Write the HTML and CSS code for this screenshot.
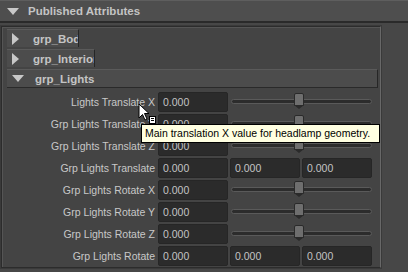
FILE: index.html
```html
<!DOCTYPE html>
<html lang="en">
<head>
  <meta charset="UTF-8" />
  <title>Published Attributes</title>
  <link rel="stylesheet" href="styles.css">
</head>
<body>

  <div class="section-head"><span class="tri-down"></span>Published Attributes</div>

  <div class="section-body">
    <div class="frame">
      <div class="group-head cut-body"><span class="tri-right"></span>grp_Body</div>
      <div class="group-head cut-interior"><span class="tri-right"></span>grp_Interior</div>
      <div class="group-head open"><span class="tri-down small"></span>grp_Lights</div>

      <div class="rows">
        <div class="row">
          <span class="label">Lights Translate X</span>
          <span class="field">0.000</span>
          <div class="slider"><div class="track"></div><div class="handle"></div></div>
        </div>
        <div class="row">
          <span class="label">Grp Lights Translate Y</span>
          <span class="field">0.000</span>
          <div class="slider"><div class="track"></div><div class="handle"></div></div>
        </div>
        <div class="row">
          <span class="label">Grp Lights Translate Z</span>
          <span class="field">0.000</span>
          <div class="slider"><div class="track"></div><div class="handle"></div></div>
        </div>
        <div class="row">
          <span class="label">Grp Lights Translate</span>
          <span class="field">0.000</span>
          <span class="field">0.000</span>
          <span class="field">0.000</span>
        </div>
        <div class="row">
          <span class="label">Grp Lights Rotate X</span>
          <span class="field">0.000</span>
          <div class="slider"><div class="track"></div><div class="handle"></div></div>
        </div>
        <div class="row">
          <span class="label">Grp Lights Rotate Y</span>
          <span class="field">0.000</span>
          <div class="slider"><div class="track"></div><div class="handle"></div></div>
        </div>
        <div class="row">
          <span class="label">Grp Lights Rotate Z</span>
          <span class="field">0.000</span>
          <div class="slider"><div class="track"></div><div class="handle"></div></div>
        </div>
        <div class="row">
          <span class="label">Grp Lights Rotate</span>
          <span class="field">0.000</span>
          <span class="field">0.000</span>
          <span class="field">0.000</span>
        </div>
      </div>
    </div>
  </div>

  <div class="tooltip">Main translation X value for headlamp geometry.</div>

  <svg class="cursor" width="20" height="22" viewBox="0 0 20 22">
    <path d="M1 1 L1 15 L4.5 11.5 L7 17 L9 16 L6.5 10.5 L11 10.5 Z" fill="#fff" stroke="#000" stroke-width="1"/>
    <rect x="11.5" y="13.5" width="6" height="7" fill="#fff" stroke="#000" stroke-width="1"/>
    <path d="M13 15.5 H16 M13 17.5 H16" stroke="#000" stroke-width="1"/>
  </svg>

</body>
</html>
```

FILE: styles.css
```css
body {
  margin: 0;
  width: 408px;
  height: 272px;
  overflow: hidden;
  background: #474747;
  font-family: "Liberation Sans", Arial, sans-serif;
  font-size: 10.5px;
  color: #c8c8c8;
  position: relative;
}
.section-head {
  height: 20px;
  border-top: 1px solid #5e5e5e;
  border-bottom: 2px solid #2a2a2a;
  background: #4e4e4e;
  display: flex;
  align-items: center;
  font-weight: bold;
  font-size: 11.5px;
  color: #c4c4c4;
}
.tri-down {
  width: 0;
  height: 0;
  border-left: 6px solid transparent;
  border-right: 6px solid transparent;
  border-top: 7px solid #c8c8c8;
  margin: 0 9px 0 7px;
}
.tri-down.small {
  margin: 0 11px 0 5px;
}
.tri-right {
  width: 0;
  height: 0;
  border-top: 6px solid transparent;
  border-bottom: 6px solid transparent;
  border-left: 7px solid #c8c8c8;
  margin: 0 14px 0 5px;
}
.section-body {
  padding: 3px 27px 0 1px;
}
.frame {
  border: 1px solid #2c2c2c;
  border-right-color: #686868;
  box-shadow: inset 1px 1px 0 #555, 0 0 0 1px #3a3a3a;
  padding: 2px 1px 2px 5px;
  background: #444;
  height: 236px;
}
.group-head {
  height: 17px;
  margin-bottom: 2px;
  background: #4c4c4c;
  border-top: 1px solid #5a5a5a;
  display: flex;
  align-items: center;
  font-weight: bold;
  font-size: 11.5px;
  color: #c4c4c4;
  overflow: hidden;
  white-space: nowrap;
}
.cut-body {
  width: 71px;
  border-right: 1px solid #262626;
}
.cut-interior {
  width: 87px;
  border-right: 1px solid #262626;
}
.open {
  margin-right: 1px;
  border-right: 1px solid #262626;
  border-bottom: 1px solid #2a2a2a;
}
.rows {
  padding-top: 1px;
}
.row {
  height: 22px;
  display: flex;
  align-items: center;
}
.label {
  width: 148px;
  text-align: right;
  padding-right: 3px;
  white-space: nowrap;
  flex-shrink: 0;
}
.field {
  width: 64px;
  height: 18px;
  line-height: 18px;
  padding-left: 4px;
  margin-right: 2px;
  background: #2b2b2b;
  border: 1px solid #262626;
  border-radius: 2px;
  color: #c4c4c4;
  flex-shrink: 0;
}
.slider {
  position: relative;
  width: 141px;
  height: 20px;
  margin-left: 1px;
}
.track {
  position: absolute;
  left: 0;
  right: 0;
  top: 7px;
  height: 3px;
  background: #2c2c2c;
  border: 1px solid #5a5a5a;
  border-radius: 3px;
}
.handle {
  position: absolute;
  left: 63px;
  top: 1px;
  width: 8px;
  height: 11px;
  background: #6e6e6e;
  border: 1px solid #2a2a2a;
  border-radius: 2px 2px 0 0;
}
.handle::after {
  content: "";
  position: absolute;
  left: -1px;
  top: 11px;
  border-left: 5px solid transparent;
  border-right: 5px solid transparent;
  border-top: 4px solid #2a2a2a;
}
.tooltip {
  position: absolute;
  left: 141px;
  top: 124px;
  width: 231px;
  height: 17px;
  line-height: 17px;
  padding: 0 3px;
  background: #ffffe1;
  border: 1px solid #000;
  color: #000;
  white-space: nowrap;
}
.cursor {
  position: absolute;
  left: 138px;
  top: 103px;
}
```
